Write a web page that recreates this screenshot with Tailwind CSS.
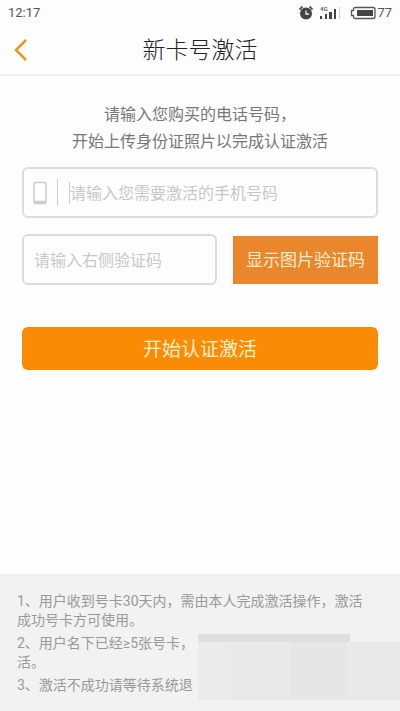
<!DOCTYPE html>
<html lang="zh-CN">
<head>
    <meta charset="UTF-8">
    <meta name="viewport" content="width=device-width, initial-scale=1.0">
    <title>新卡号激活</title>
    <script src="https://cdn.jsdelivr.net/npm/@tailwindcss/browser@4"></script>
</head>
<body class="flex min-h-screen flex-col bg-[#fdfdfd] font-['Roboto','Noto_Sans_CJK_SC',sans-serif]">
    <!-- Status bar -->
    <div class="flex h-[25px] items-center justify-between pr-2 pl-2 text-[13px] text-[#555]">
        <div>12:17</div>
        <div class="flex items-center">
            <svg class="mr-[6px] h-4 w-4" viewBox="0 0 16 16" fill="none">
                <circle cx="8" cy="8.500" r="6" fill="#444"/>
                <path d="M1.500 4.500 4.500 1.500M14.500 4.500l-3-3" stroke="#555" stroke-width="1.800"/>
                <path d="M8 5.500v3.500h3" stroke="#eee" stroke-width="1.300"/>
            </svg>
            <svg class="mr-2 h-4 w-[22px]" viewBox="0 0 22 16">
                <text x="0" y="6" font-size="6" font-weight="bold" fill="#666">4G</text>
                <path d="M0 11h2v3H0zM5 9h2v5H5zM9 7h3v7H9zM14 4h2v10h-2z" fill="#444"/>
                <path d="M19 2h1v12h-1z" fill="#ccc"/>
            </svg>
            <svg class="mr-px h-4 w-[26px]" viewBox="0 0 26 16" fill="none">
                <path d="M5 2.500h18a2 2 0 0 1 2 2v7a2 2 0 0 1-2 2H5a1.500 1.500 0 0 1-1.500-1.500v-1.500H1.500v-5h2V4A1.500 1.500 0 0 1 5 2.500z" stroke="#555" stroke-width="1.300"/>
                <rect x="7" y="5" width="16" height="6" fill="#444"/>
            </svg>
            <div>77</div>
        </div>
    </div>

    <!-- Header -->
    <header class="grid h-[51px] grid-cols-[48px_1fr_48px] items-center border-b-2 border-[#f2f2f2]">
        <button aria-label="返回" class="flex h-full items-center pl-[14px]">
            <svg class="h-6 w-4" viewBox="0 0 16 24" fill="none">
                <path d="M12 2 2 12l10 10" stroke="#e39a1f" stroke-width="2.500"/>
            </svg>
        </button>
        <h1 class="pt-0.5 text-center text-[23px] leading-8 font-light text-[#222]">新卡号激活</h1>
    </header>

    <!-- Form -->
    <main class="px-[22px] pt-[25px]">
        <p class="text-center text-base leading-[27px] text-[#777]">请输入您购买的电话号码，<br>开始上传身份证照片以完成认证激活</p>

        <form>
            <div class="mt-3 flex h-[51px] items-center rounded-md border-2 border-[#dcdcdc] bg-[#fdfdfd] pl-[9px]">
                <svg class="h-6 w-[14px]" viewBox="0 0 14 24" fill="none">
                    <rect x="1" y="1.500" width="12" height="21" rx="2" stroke="#ccc" stroke-width="1.500"/>
                    <path d="M1.500 21h11" stroke="#ccc" stroke-width="2.500"/>
                </svg>
                <div class="ml-[10px] h-[27px] w-px bg-[#ccc]"></div>
                <div class="ml-[11px] h-[22px] w-px bg-[#ccc]"></div>
                <input type="tel" aria-label="手机号码" placeholder="请输入您需要激活的手机号码" class="h-full min-w-0 flex-1 bg-transparent pt-0.5 text-base outline-none placeholder:text-[#c8c8c8]">
            </div>

            <div class="mt-4 flex items-center gap-4">
                <input type="text" aria-label="验证码" placeholder="请输入右侧验证码" class="h-[51px] min-w-0 flex-1 rounded-md border-2 border-[#dcdcdc] bg-[#fdfdfd] px-[10px] pt-0.5 text-base outline-none placeholder:text-[#c8c8c8]">
                <button type="button" class="h-12 w-[145px] bg-[#ea862c] pt-0.5 text-[17px] text-[#fdeed0]">显示图片验证码</button>
            </div>

            <button type="submit" class="mt-[42px] h-[43px] w-full rounded-md bg-[#fa8c05] pt-1 text-[19px] text-[#fff0cc]">开始认证激活</button>
        </form>
    </main>

    <!-- Notes -->
    <footer class="relative mt-auto bg-[#f2f2f2] pt-[18px] pr-7 pb-4 pl-[17px] text-[14px] leading-[19px] text-[#999]">
        <div class="space-y-1">
            <p>1、用户收到号卡30天内，需由本人完成激活操作，激活成功号卡方可使用。</p>
            <p>2、用户名下已经≥5张号卡，<br>活。</p>
            <p>3、激活不成功请等待系统退</p>
        </div>
        <!-- Masked part of the notes -->
        <div class="absolute top-[60px] right-0 left-[198px]">
            <div class="h-2 w-[152px] bg-[#dfdfdf]"></div>
            <div class="flex h-[58px] bg-[#e9e9e9]">
                <div class="w-[33px] bg-[#ebebeb]"></div>
                <div class="w-[60px] bg-[#e9e9e9]"></div>
                <div class="w-[56px] bg-[#e6e6e6]"></div>
            </div>
        </div>
    </footer>
</body>
</html>
